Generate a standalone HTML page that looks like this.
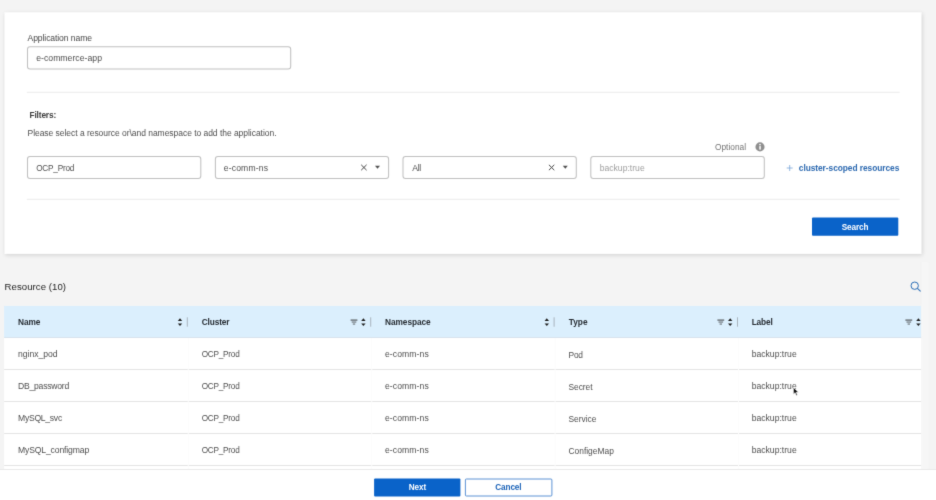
<!DOCTYPE html>
<html><head><meta charset="utf-8">
<style>
*{box-sizing:border-box;margin:0;padding:0}
html,body{width:936px;height:500px;overflow:hidden;background:#f4f4f4;font-family:"Liberation Sans",sans-serif;color:#555}
#root{position:absolute;left:0;top:0;width:936px;height:500px;will-change:transform;transform:translateZ(0);filter:url(#soft)}
.abs{position:absolute}
.t{position:absolute;white-space:nowrap;line-height:12px;font-size:8.6px;color:#5a5a5a}
</style></head><body>
<svg width="0" height="0" style="position:absolute"><defs><filter id="soft" x="0" y="0" width="100%" height="100%" color-interpolation-filters="sRGB"><feConvolveMatrix order="3" kernelMatrix="0.012 0.086 0.012 0.086 0.608 0.086 0.012 0.086 0.012" edgeMode="duplicate" preserveAlpha="false"/></filter></defs></svg>
<div id="root">

<svg class="abs" style="left:0;top:0" width="936" height="500" viewBox="0 0 936 500">
<defs><filter id="sh" x="-5%" y="-5%" width="110%" height="110%"><feGaussianBlur stdDeviation="2.1"/></filter></defs>
<rect x="921.3" y="262" width="6.8" height="207" fill="#f6f6f6"/>
<rect x="5.3" y="13.3" width="917.2" height="242" fill="#000" opacity="0.13" filter="url(#sh)"/>
<rect x="4.5" y="12.3" width="917" height="241.6" fill="#fff"/>
<g fill="#fff" stroke="#c0c0c0" stroke-width="1.05">
<rect x="27.5" y="46.8" width="263.2" height="22.1" rx="2.5"/>
<rect x="27.5" y="156.5" width="173.3" height="22" rx="2.5"/>
<rect x="215.4" y="156.5" width="173.2" height="22" rx="2.5"/>
<rect x="403.0" y="156.5" width="173.3" height="22" rx="2.5"/>
<rect x="590.8" y="156.5" width="173.5" height="22" rx="2.5"/>
</g>
<rect x="26.8" y="91.8" width="872.8" height="1" fill="#ebebeb"/>
<rect x="26.8" y="198.8" width="872.8" height="1" fill="#ebebeb"/>
<rect x="812" y="217.6" width="86.3" height="18.1" rx="1" fill="#0a63c9"/>
<rect x="4.1" y="337" width="917" height="133" fill="#fff"/>
<rect x="4.1" y="305.9" width="917" height="31.7" fill="#dbeffd"/>
<rect x="4.1" y="337" width="917" height="0.8" fill="#d3dfe9"/>
<rect x="4.1" y="369" width="917" height="1" fill="#e4e4e4"/>
<rect x="4.1" y="401" width="917" height="1" fill="#e4e4e4"/>
<rect x="4.1" y="433" width="917" height="1" fill="#e4e4e4"/>
<rect x="4.1" y="465" width="917" height="1" fill="#e4e4e4"/>
<rect x="187.8" y="338" width="1" height="131" fill="#fcfcfc"/>
<rect x="371.2" y="338" width="1" height="131" fill="#fcfcfc"/>
<rect x="554.6" y="338" width="1" height="131" fill="#fcfcfc"/>
<rect x="738.0" y="338" width="1" height="131" fill="#fcfcfc"/>
<rect x="0" y="469.8" width="936" height="31" fill="#fff"/>
<rect x="0" y="469" width="936" height="1" fill="#e9e9e9"/>
<rect x="374.1" y="478.5" width="86.3" height="18" rx="1" fill="#0a63c9"/>
<rect x="465.4" y="479" width="86.5" height="17" rx="1" fill="#fff" stroke="#4a86cf" stroke-width="0.9"/>
</svg>
<div class="t" style="left:27.5px;top:32.00px;font-size:8.6px;color:#484848;letter-spacing:-0.096px">Application name</div>
<div class="t" style="left:36.2px;top:52.00px;font-size:8.7px;color:#4e4e4e;letter-spacing:0.010px">e-commerce-app</div>
<div class="t" style="left:29.5px;top:109.00px;font-size:8.3px;color:#3c3c3c;font-weight:700;letter-spacing:-0.139px">Filters:</div>
<div class="t" style="left:27.5px;top:127.00px;font-size:8.5px;color:#4e4e4e;letter-spacing:-0.037px">Please select a resource or\and namespace to add the application.</div>
<div class="t" style="left:36.2px;top:163.00px;font-size:8.2px;color:#4e4e4e;letter-spacing:-0.199px">OCP_Prod</div>
<div class="t" style="left:223.8px;top:162.00px;font-size:8.6px;color:#4e4e4e;letter-spacing:0.152px">e-comm-ns</div>
<div class="t" style="left:412.2px;top:162.00px;font-size:8.6px;color:#4e4e4e;letter-spacing:-0.231px">All</div>
<div class="t" style="left:599.7px;top:162.00px;font-size:8.6px;color:#9e9e9e;letter-spacing:0.008px">backup:true</div>
<div class="t" style="left:715.0px;top:141.00px;font-size:8.3px;color:#727272;letter-spacing:0.028px">Optional</div>
<div class="t" style="left:798.8px;top:162.00px;font-size:8.4px;color:#2c69b0;font-weight:700;letter-spacing:-0.063px">cluster-scoped resources</div>
<div class="t" style="left:4.6px;top:281.00px;font-size:9.6px;color:#1e1e1e;letter-spacing:0.050px">Resource (10)</div>
<div class="t" style="left:18.0px;top:316.00px;font-size:8.3px;color:#262c32;font-weight:700;letter-spacing:-0.103px">Name</div>
<div class="t" style="left:201.7px;top:316.00px;font-size:8.3px;color:#262c32;font-weight:700;letter-spacing:-0.132px">Cluster</div>
<div class="t" style="left:385.0px;top:316.00px;font-size:8.3px;color:#262c32;font-weight:700;letter-spacing:-0.053px">Namespace</div>
<div class="t" style="left:568.8px;top:316.00px;font-size:8.3px;color:#262c32;font-weight:700;letter-spacing:-0.017px">Type</div>
<div class="t" style="left:751.7px;top:316.00px;font-size:8.3px;color:#262c32;font-weight:700;letter-spacing:-0.143px">Label</div>
<div class="t" style="left:18.0px;top:348.00px;font-size:8.6px;color:#4e4e4e;letter-spacing:-0.021px">nginx_pod</div>
<div class="t" style="left:201.7px;top:349.00px;font-size:8.2px;color:#4e4e4e;letter-spacing:-0.228px">OCP_Prod</div>
<div class="t" style="left:385.0px;top:348.00px;font-size:8.6px;color:#4e4e4e;letter-spacing:0.089px">e-comm-ns</div>
<div class="t" style="left:568.5px;top:349.00px;font-size:8.4px;color:#4e4e4e;letter-spacing:-0.203px">Pod</div>
<div class="t" style="left:751.7px;top:348.00px;font-size:8.6px;color:#4e4e4e;letter-spacing:0.008px">backup:true</div>
<div class="t" style="left:18.0px;top:380.00px;font-size:8.6px;color:#4e4e4e;letter-spacing:-0.230px">DB_password</div>
<div class="t" style="left:201.7px;top:381.00px;font-size:8.2px;color:#4e4e4e;letter-spacing:-0.228px">OCP_Prod</div>
<div class="t" style="left:385.0px;top:380.00px;font-size:8.6px;color:#4e4e4e;letter-spacing:0.089px">e-comm-ns</div>
<div class="t" style="left:568.5px;top:381.00px;font-size:8.4px;color:#4e4e4e;letter-spacing:-0.044px">Secret</div>
<div class="t" style="left:751.7px;top:380.00px;font-size:8.6px;color:#4e4e4e;letter-spacing:0.008px">backup:true</div>
<div class="t" style="left:18.0px;top:412.00px;font-size:8.6px;color:#4e4e4e;letter-spacing:-0.266px">MySQL_svc</div>
<div class="t" style="left:201.7px;top:413.00px;font-size:8.2px;color:#4e4e4e;letter-spacing:-0.228px">OCP_Prod</div>
<div class="t" style="left:385.0px;top:412.00px;font-size:8.6px;color:#4e4e4e;letter-spacing:0.089px">e-comm-ns</div>
<div class="t" style="left:568.5px;top:413.00px;font-size:8.4px;color:#4e4e4e;letter-spacing:-0.023px">Service</div>
<div class="t" style="left:751.7px;top:412.00px;font-size:8.6px;color:#4e4e4e;letter-spacing:0.008px">backup:true</div>
<div class="t" style="left:18.0px;top:444.00px;font-size:8.6px;color:#4e4e4e;letter-spacing:-0.135px">MySQL_configmap</div>
<div class="t" style="left:201.7px;top:445.00px;font-size:8.2px;color:#4e4e4e;letter-spacing:-0.228px">OCP_Prod</div>
<div class="t" style="left:385.0px;top:444.00px;font-size:8.6px;color:#4e4e4e;letter-spacing:0.089px">e-comm-ns</div>
<div class="t" style="left:568.5px;top:445.00px;font-size:8.4px;color:#4e4e4e;letter-spacing:0.014px">ConfigeMap</div>
<div class="t" style="left:751.7px;top:444.00px;font-size:8.6px;color:#4e4e4e;letter-spacing:0.008px">backup:true</div>
<svg class="abs" style="left:0;top:0" width="936" height="500" viewBox="0 0 936 500">
<path d="M361.2 164.8L366.59999999999997 170.2M366.59999999999997 164.8L361.2 170.2" stroke="#444" stroke-width="1" fill="none"/>
<path d="M375.0 165.8h5L377.5 168.8z" fill="#505050"/>
<path d="M548.9 164.8L554.3000000000001 170.2M554.3000000000001 164.8L548.9 170.2" stroke="#444" stroke-width="1" fill="none"/>
<path d="M562.8 165.8h5L565.3 168.8z" fill="#505050"/>
<circle cx="760" cy="146.9" r="4.55" fill="#8f8f8f"/><rect x="759.3" y="146.1" width="1.5" height="3.5" fill="#fff"/><circle cx="760" cy="144.6" r="0.85" fill="#fff"/>
<path d="M789.7 165V171M786.7 168H792.7" stroke="#76a3d8" stroke-width="0.8" fill="none"/>
<circle cx="914.7" cy="285.7" r="3.7" stroke="#2a6db5" stroke-width="1" fill="none"/><path d="M917.4 288.4L920.6 291.4" stroke="#2a6db5" stroke-width="1.1" fill="none"/>
<path d="M177.8 321.0L180 318.3L182.2 321.0z" fill="#1e1e1e"/><path d="M177.8 323.4L180 326.09999999999997L182.2 323.4z" fill="#1e1e1e"/>
<rect x="186.8" y="317.3" width="1" height="9.4" fill="#a9b4bd"/>
<rect x="350.6" y="319.40000000000003" width="6.8" height="1.4" fill="#696f75"/><rect x="351.7" y="321.5" width="4.6" height="1.1" fill="#696f75"/><rect x="352.8" y="323.5" width="2.4" height="1.1" fill="#696f75"/>
<path d="M361.2 321.0L363.4 318.3L365.59999999999997 321.0z" fill="#1e1e1e"/><path d="M361.2 323.4L363.4 326.09999999999997L365.59999999999997 323.4z" fill="#1e1e1e"/>
<rect x="370.2" y="317.3" width="1" height="9.4" fill="#a9b4bd"/>
<path d="M544.5999999999999 321.0L546.8 318.3L549.0 321.0z" fill="#1e1e1e"/><path d="M544.5999999999999 323.4L546.8 326.09999999999997L549.0 323.4z" fill="#1e1e1e"/>
<rect x="553.6" y="317.3" width="1" height="9.4" fill="#a9b4bd"/>
<rect x="717.4" y="319.40000000000003" width="6.8" height="1.4" fill="#696f75"/><rect x="718.5" y="321.5" width="4.6" height="1.1" fill="#696f75"/><rect x="719.5999999999999" y="323.5" width="2.4" height="1.1" fill="#696f75"/>
<path d="M728.0 321.0L730.2 318.3L732.4000000000001 321.0z" fill="#1e1e1e"/><path d="M728.0 323.4L730.2 326.09999999999997L732.4000000000001 323.4z" fill="#1e1e1e"/>
<rect x="737.0" y="317.3" width="1" height="9.4" fill="#a9b4bd"/>
<rect x="905.4" y="319.40000000000003" width="6.8" height="1.4" fill="#696f75"/><rect x="906.5" y="321.5" width="4.6" height="1.1" fill="#696f75"/><rect x="907.5999999999999" y="323.5" width="2.4" height="1.1" fill="#696f75"/>
<path d="M916.1999999999999 321.0L918.4 318.3L920.6 321.0z" fill="#1e1e1e"/><path d="M916.1999999999999 323.4L918.4 326.09999999999997L920.6 323.4z" fill="#1e1e1e"/>
<path transform="translate(792.4 386.6)" d="M1 0.8V7.6L2.7 6.1L3.9 8.8L5 8.3L3.8 5.7H6.1z" fill="#111" stroke="#fff" stroke-width="0.6"/>
</svg>
<div class="t" style="left:841.7px;top:222.00px;font-size:8.2px;color:#fff;font-weight:700;letter-spacing:-0.103px">Search</div>
<div class="t" style="left:408.7px;top:482.00px;font-size:8.2px;color:#fff;font-weight:700;letter-spacing:-0.050px">Next</div>
<div class="t" style="left:495.3px;top:482.00px;font-size:8.2px;color:#1a62b8;font-weight:700;letter-spacing:-0.112px">Cancel</div>
</div>
</body></html>
